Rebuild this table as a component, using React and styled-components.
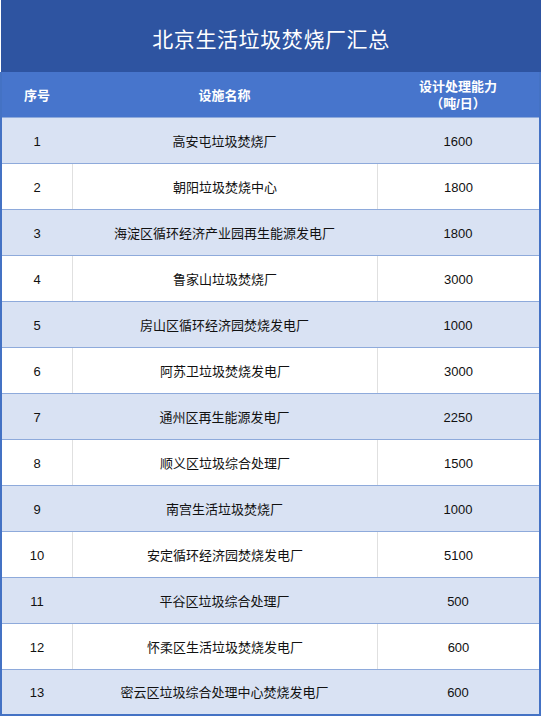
import React from "react";
import styled, { createGlobalStyle } from "styled-components";

const GlobalStyle = createGlobalStyle`
  html, body {
    margin: 0;
    padding: 0;
    background: #ffffff;
  }
  * {
    box-sizing: border-box;
  }
`;

const Page = styled.div`
  width: 541px;
  font-family: "Liberation Sans", "Noto Sans CJK SC", sans-serif;
`;

const Title = styled.div`
  height: 72px;
  background: #2e54a1;
  border-left: 1px solid #ffffff;
  display: flex;
  align-items: center;
  justify-content: center;
  color: #ffffff;
  font-family: "Liberation Serif", "Noto Sans CJK SC", serif;
  font-size: 21px;
  letter-spacing: 0.6px;
  padding-top: 4px;
`;

const Table = styled.div`
  border-left: 2px solid #4472c4;
  border-right: 2px solid #4472c4;
`;

const Row = styled.div`
  display: grid;
  grid-template-columns: 70px 305px 1fr;
  height: 46px;
  background: ${(p) => (p.$head ? "#4775cc" : p.$alt ? "#d9e2f3" : "#ffffff")};
  border-bottom: 1px solid ${(p) => (p.$last ? "#4472c4" : "#8eaadb")};
  border-bottom-width: ${(p) => (p.$last ? "2px" : "1px")};
  color: ${(p) => (p.$head ? "#ffffff" : "#111111")};
  font-size: 13px;
  font-weight: ${(p) => (p.$head ? 700 : 400)};
`;

const Cell = styled.div`
  display: flex;
  flex-direction: column;
  align-items: center;
  justify-content: center;
  text-align: center;
  line-height: 17px;
  padding-top: 1px;
  border-left: ${(p) => (p.$line ? "1px solid #e0e0e0" : "none")};
`;

const rows = [
  ["1", "高安屯垃圾焚烧厂", "1600"],
  ["2", "朝阳垃圾焚烧中心", "1800"],
  ["3", "海淀区循环经济产业园再生能源发电厂", "1800"],
  ["4", "鲁家山垃圾焚烧厂", "3000"],
  ["5", "房山区循环经济园焚烧发电厂", "1000"],
  ["6", "阿苏卫垃圾焚烧发电厂", "3000"],
  ["7", "通州区再生能源发电厂", "2250"],
  ["8", "顺义区垃圾综合处理厂", "1500"],
  ["9", "南宫生活垃圾焚烧厂", "1000"],
  ["10", "安定循环经济园焚烧发电厂", "5100"],
  ["11", "平谷区垃圾综合处理厂", "500"],
  ["12", "怀柔区生活垃圾焚烧发电厂", "600"],
  ["13", "密云区垃圾综合处理中心焚烧发电厂", "600"],
];

export default function App() {
  return (
    <Page>
      <GlobalStyle />
      <Title>北京生活垃圾焚烧厂汇总</Title>
      <Table>
        <Row $head>
          <Cell>序号</Cell>
          <Cell>设施名称</Cell>
          <Cell>
            <span>设计处理能力</span>
            <span>（吨/日）</span>
          </Cell>
        </Row>
        {rows.map((r, i) => {
          const alt = i % 2 === 0;
          return (
            <Row key={r[0]} $alt={alt} $last={i === rows.length - 1}>
              <Cell>{r[0]}</Cell>
              <Cell $line={!alt}>{r[1]}</Cell>
              <Cell $line={!alt}>{r[2]}</Cell>
            </Row>
          );
        })}
      </Table>
    </Page>
  );
}
